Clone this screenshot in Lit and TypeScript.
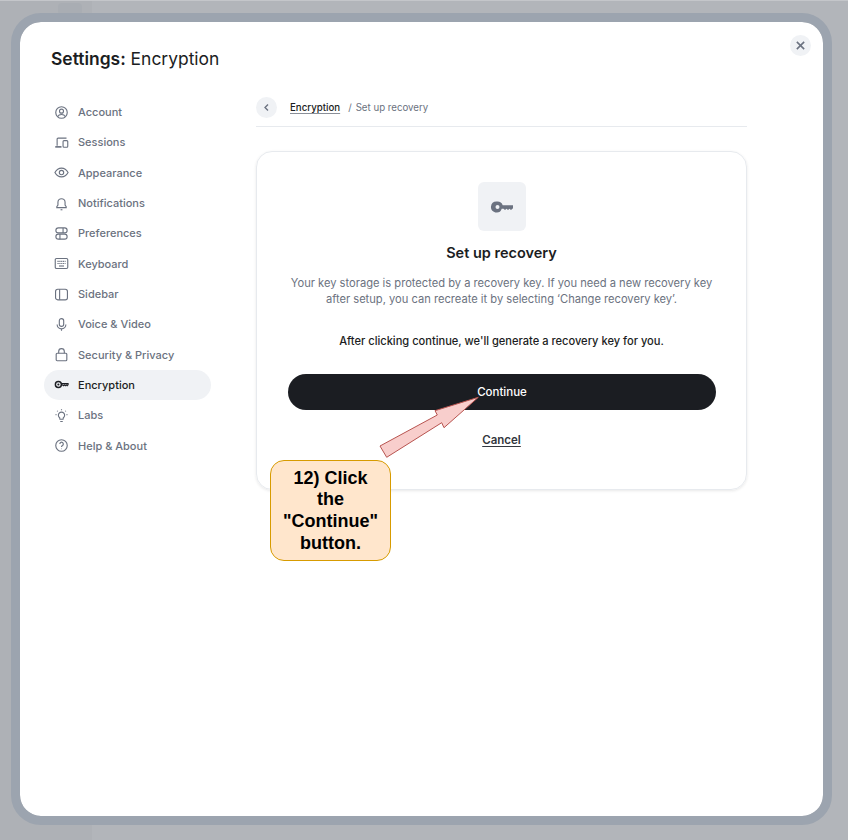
import { LitElement, html, css, svg } from "lit";
import { customElement } from "lit/decorators.js";

const icons: Record<string, unknown> = {
  account: svg`<circle cx="12" cy="12" r="9.200"/><circle cx="12" cy="9.800" r="3.200"/><path d="M6 18.600c1-2.400 3.200-3.400 6-3.400s5 1 6 3.400"/>`,
  sessions: svg`<path d="M5 17V6.500A1.500 1.500 0 0 1 6.500 5H20"/><path d="M2 19h10" stroke-width="2.600"/><rect x="14.500" y="9" width="7.500" height="10.500" rx="1.500"/>`,
  appearance: svg`<path d="M1.500 12c2.500-4.600 6-7 10.500-7s8 2.400 10.500 7c-2.500 4.600-6 7-10.500 7S4 16.600 1.500 12z"/><circle cx="12" cy="12" r="3.500"/>`,
  notifications: svg`<path d="M4.500 18.500v-1.600l1.800-2.400V10a5.700 5.700 0 0 1 11.400 0v4.500l1.800 2.400v1.600z"/><path d="M10.500 22h3"/>`,
  preferences: svg`<rect x="3" y="3" width="18" height="8" rx="4"/><path d="M14.500 3v8"/><rect x="3" y="13" width="18" height="8" rx="4"/><path d="M9.500 13v8"/>`,
  keyboard: svg`<rect x="2" y="4" width="20" height="16" rx="2"/><path d="M5.500 8.500h13M5.500 12h13" stroke-dasharray="2 1"/><path d="M8 16h8"/>`,
  sidebar: svg`<rect x="2.500" y="3.500" width="19" height="17" rx="3.500"/><path d="M9 3.500v17"/>`,
  voice: svg`<rect x="8.500" y="2.500" width="7" height="12.500" rx="3.500"/><path d="M5 12a7 7 0 0 0 14 0M12 19v3"/>`,
  security: svg`<rect x="3.500" y="10" width="17" height="12" rx="1.500"/><path d="M7.500 10V7a4.500 4.500 0 0 1 9 0v3"/>`,
  encryption: svg`<circle cx="7" cy="12" r="4.800" stroke-width="2.300"/><circle cx="7" cy="12" r=".8"/><path d="M12 10.500h10.500v1.800l-1.500 1.700-1.500-1.300-1.500 1.300-1.500-1.300-1.500 1.300-1.500-1.300H12" stroke-width="1.800"/>`,
  labs: svg`<path d="M9 15.500a5 5 0 1 1 6 0l-.5 2.500h-5z"/><path d="M10 21.500h4M12 2v1.500M2.500 10.500H4M20 10.500h1.500M5 4.500l1 1M19 4.500l-1 1"/>`,
  help: svg`<circle cx="12" cy="12" r="9.200"/><path d="M9.300 9.500a2.800 2.800 0 1 1 4.300 2.400c-1 .6-1.600 1.200-1.600 2.300"/><path d="M12 17v.8"/>`,
};

const items = [
  ["account", "Account"],
  ["sessions", "Sessions"],
  ["appearance", "Appearance"],
  ["notifications", "Notifications"],
  ["preferences", "Preferences"],
  ["keyboard", "Keyboard"],
  ["sidebar", "Sidebar"],
  ["voice", "Voice & Video"],
  ["security", "Security & Privacy"],
  ["encryption", "Encryption"],
  ["labs", "Labs"],
  ["help", "Help & About"],
];

@customElement("app-root")
export class AppRoot extends LitElement {
  static styles = css`
    :host {
      display: block;
      width: 848px;
      height: 840px;
      font-family: Inter, "Noto Sans", sans-serif;
      color: #1b1d22;
    }
    .page {
      position: relative;
      box-sizing: border-box;
      width: 848px;
      height: 840px;
      padding: 13px 16px 15px 11px;
      overflow: hidden;
      background:
        linear-gradient(#c4c6ca, #c4c6ca) top / 100% 1px no-repeat,
        linear-gradient(90deg, #aeb1b6 0, #aeb1b6 92px, #b2b5ba 92px);
    }
    .ghost {
      position: absolute;
      left: 58px;
      top: 3px;
      width: 24px;
      height: 12px;
      border-radius: 4px;
      background: #a9adb3;
    }
    .modal {
      box-sizing: border-box;
      width: 821px;
      height: 812px;
      border: 9px solid #9ca4af;
      border-radius: 30px;
      background: #fff;
      background-clip: padding-box;
      position: relative;
      padding: 27px 76px 0 31px;
    }
    .title {
      margin: 0;
      font-size: 17.450px;
      line-height: 20px;
      font-weight: 400;
    }
    .title b {
      font-weight: 600;
    }
    .columns {
      display: flex;
      margin-top: 28px;
    }
    nav {
      width: 167px;
      margin: 0 45px 0 -7px;
      flex: none;
    }
    .item {
      display: flex;
      align-items: center;
      gap: 9.500px;
      height: 30.320px;
      padding-left: 9.500px;
      border-radius: 15px;
      font-size: 11px;
      font-weight: 500;
      color: #6b7280;
    }
    .item.active {
      background: #f0f2f5;
      color: #1b1d22;
    }
    .item svg {
      width: 15px;
      height: 15px;
      fill: none;
      stroke: currentColor;
      stroke-width: 1.800;
      flex: none;
    }
    main {
      width: 491px;
      flex: none;
    }
    .crumbs {
      display: flex;
      align-items: center;
      height: 21px;
      padding-bottom: 8px;
      border-bottom: 1px solid #e7eaee;
      font-size: 9.700px;
      color: #6b7280;
    }
    .back {
      width: 21px;
      height: 21px;
      border-radius: 50%;
      background: #f0f2f5;
      display: flex;
      align-items: center;
      justify-content: center;
      margin-right: 13px;
    }
    .back svg {
      width: 9px;
      height: 9px;
      fill: none;
      stroke: #6b7280;
      stroke-width: 1.800;
    }
    .crumbs u {
      color: #1b1d22;
      font-weight: 500;
      text-underline-offset: 2px;
      text-decoration-color: #8a8f98;
    }
    .sep {
      margin: 0 4px 0 8px;
    }
    .card {
      box-sizing: border-box;
      height: 339px;
      margin-top: 24px;
      border: 1px solid #e7eaee;
      border-radius: 16px;
      box-shadow: 0 1px 3px rgba(27, 29, 34, 0.1);
      padding: 30px 30px 0;
      display: flex;
      flex-direction: column;
      align-items: center;
    }
    .keybox {
      width: 48px;
      height: 49px;
      border-radius: 6px;
      background: #f0f2f5;
      display: flex;
      align-items: center;
      justify-content: center;
    }
    .keybox svg {
      width: 24px;
      height: 24px;
    }
    h2 {
      margin: 12px 0 0;
      font-size: 14.500px;
      line-height: 20px;
      font-weight: 600;
    }
    .desc {
      margin: 12px 0 0;
      width: 430px;
      text-align: center;
      font-size: 11.150px;
      line-height: 16px;
      color: #6b7280;
    }
    .strong {
      margin: 26px 0 0;
      font-size: 11.100px;
      line-height: 16px;
      font-weight: 500;
    }
    .continue {
      margin: 25px 0 0 1px;
      width: 428px;
      height: 36px;
      border-radius: 18px;
      background: #1b1d22;
      color: #fff;
      font-size: 11.500px;
      font-weight: 500;
      display: flex;
      align-items: center;
      justify-content: center;
    }
    .cancel {
      margin-top: 22px;
      font-size: 11.500px;
      line-height: 16px;
      font-weight: 600;
      color: #33373e;
      text-decoration: underline;
      text-underline-offset: 2px;
    }
    .close {
      position: absolute;
      top: 13px;
      right: 12px;
      width: 21px;
      height: 21px;
      border-radius: 50%;
      background: #f0f2f5;
      display: flex;
      align-items: center;
      justify-content: center;
    }
    .close svg {
      width: 11px;
      height: 11px;
      stroke: #6b7280;
      stroke-width: 1.700;
      fill: none;
    }
    .arrow {
      position: absolute;
      left: 0;
      top: 0;
      width: 848px;
      height: 840px;
      pointer-events: none;
    }
    .callout {
      position: absolute;
      box-sizing: border-box;
      left: 270px;
      top: 460px;
      width: 121px;
      height: 101px;
      border: 1px solid #d79b00;
      border-radius: 14px;
      background: #ffe6cc;
      display: flex;
      align-items: center;
      justify-content: center;
      text-align: center;
      padding: 1px 10px 0;
      font-family: "Liberation Sans", Arial, sans-serif;
      font-size: 18px;
      line-height: 21.600px;
      font-weight: 700;
      color: #000;
    }
  `;

  render() {
    return html`<div class="page">
      <div class="ghost"></div>
      <div class="modal">
        <h1 class="title"><b>Settings:</b> Encryption</h1>
        <div class="close">
          <svg viewBox="0 0 12 12"><path d="M2 2l8 8M10 2l-8 8" /></svg>
        </div>
        <div class="columns">
          <nav>
            ${items.map(
              ([k, label]) => html`<div class="item ${k === "encryption" ? "active" : ""}">
                <svg viewBox="0 0 24 24">${icons[k]}</svg><span>${label}</span>
              </div>`
            )}
          </nav>
          <main>
            <div class="crumbs">
              <div class="back"><svg viewBox="0 0 12 12"><path d="M8 2L4 6l4 4" /></svg></div>
              <u>Encryption</u><span class="sep">/</span><span>Set up recovery</span>
            </div>
            <div class="card">
              <div class="keybox">
                <svg viewBox="0 0 24 24">
                  <path
                    fill="#6b7280"
                    fill-rule="evenodd"
                    d="M7.500 6.500a5.500 5.500 0 0 1 5.200 3.700H23v3l-2 1.800-1.500-1.300-1.500 1.300-1.500-1.300-1.500 1.300-1.500-1.300h-1.800a5.500 5.500 0 1 1-5.200-7.200zm0 3.500a2 2 0 1 0 0 4 2 2 0 0 0 0-4z"
                  />
                </svg>
              </div>
              <h2>Set up recovery</h2>
              <p class="desc">
                Your key storage is protected by a recovery key. If you need a new recovery key after setup, you can
                recreate it by selecting ‘Change recovery key’.
              </p>
              <p class="strong">After clicking continue, we'll generate a recovery key for you.</p>
              <div class="continue">Continue</div>
              <div class="cancel">Cancel</div>
            </div>
          </main>
        </div>
      </div>
      <svg class="arrow" viewBox="0 0 848 840">
        <path
          d="M478.300 397.300L444 427.700 441.700 422.700 386.700 457.300 380 446 437.300 415 435 410.700z"
          fill="#f8cecc"
          stroke="#b85450"
        />
      </svg>
      <div class="callout">12) Click the "Continue" button.</div>
    </div>`;
  }
}
